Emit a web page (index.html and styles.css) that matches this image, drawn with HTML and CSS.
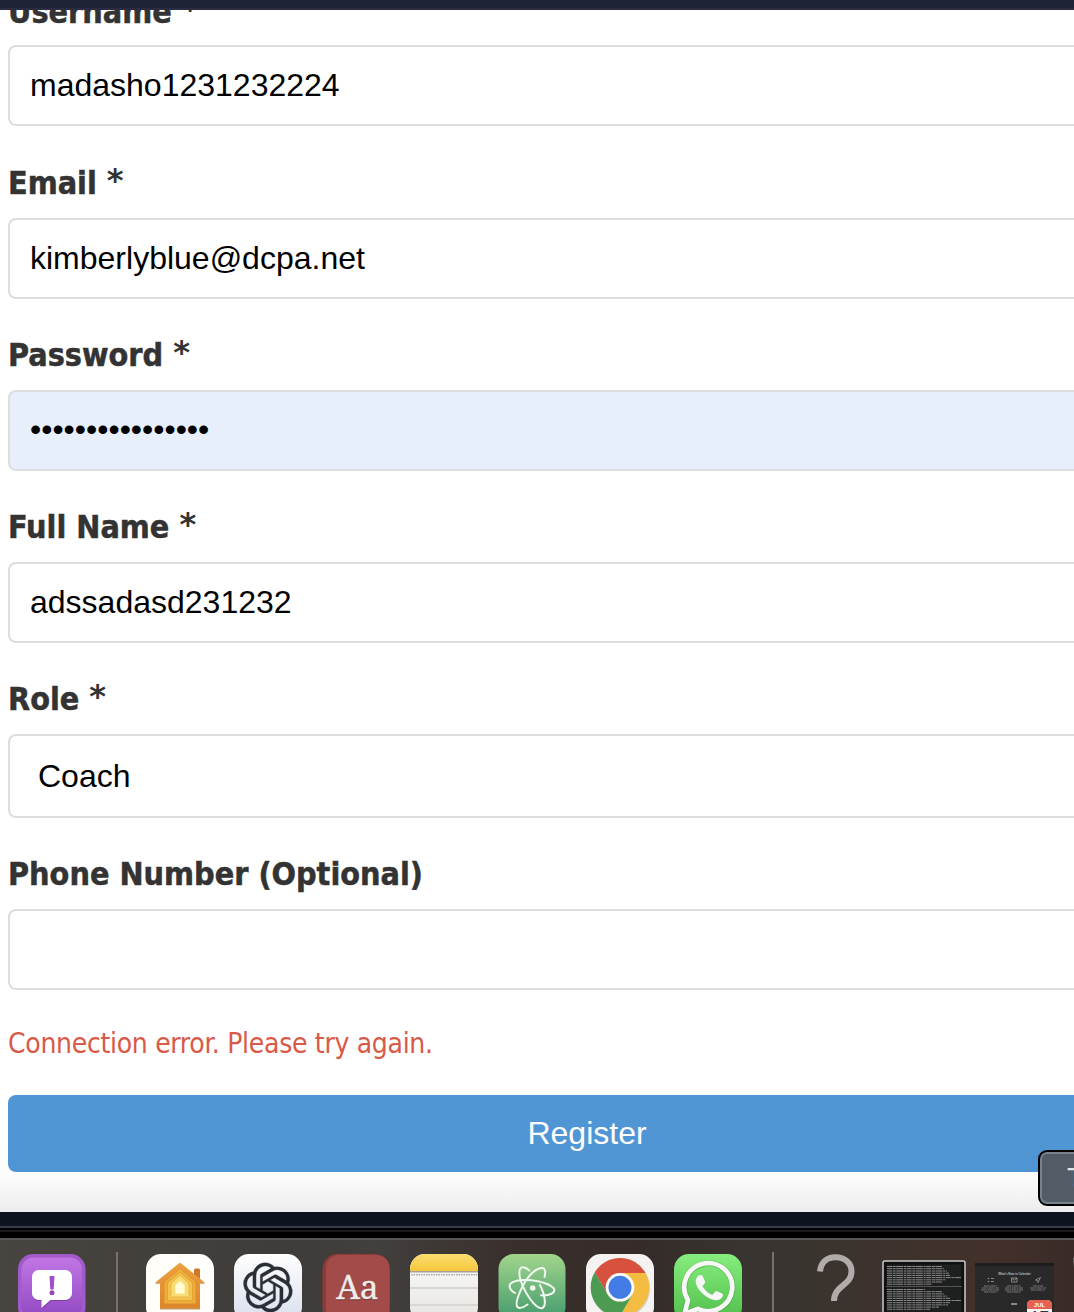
FILE: index.html
```html
<!DOCTYPE html>
<html lang="en">
<head>
<meta charset="utf-8">
<title>Register</title>
<link rel="stylesheet" href="styles.css">
</head>
<body>
<div class="screen">
  <div class="titlebar"></div>
  <main class="page">
    <form class="form">
      <div class="field"><label for="username">Username <span class="star">*</span></label><input id="username" type="text" value="madasho1231232224"></div>
      <div class="field"><label for="email">Email <span class="star">*</span></label><input id="email" type="text" value="kimberlyblue@dcpa.net"></div>
      <div class="field"><label for="password">Password <span class="star">*</span></label><input id="password" class="autofilled" type="text" value="••••••••••••••••"></div>
      <div class="field"><label for="fullname">Full Name <span class="star">*</span></label><input id="fullname" type="text" value="adssadasd231232"></div>
      <div class="field"><label for="role">Role <span class="star">*</span></label><select id="role"><option>Coach</option></select></div>
      <div class="field"><label for="phone">Phone Number (Optional)</label><input id="phone" type="text"></div>
      <p class="error">Connection error. Please try again.</p>
      <button class="submit" type="button">Register</button>
    </form>
    <div class="shade"></div>
    <div class="tooltip">T</div>
  </main>
  <div class="bezel"></div>
  <nav class="dock">
    <svg class="app" viewBox="0 0 68 68">
      <defs>
        <linearGradient id="purple" x2="0" y2="1"><stop stop-color="#c276e5"/><stop offset="1" stop-color="#9048c2"/></linearGradient>
      </defs>
      <rect width="67.500" height="68" rx="15" fill="#a25acb"/>
      <rect x="3.500" y="3.500" width="60.500" height="61" rx="12" fill="url(#purple)"/>
      <path d="M20.500 17.500H47.500a6.500 6.500 0 0 1 6.500 6.500V40.500a6.500 6.500 0 0 1-6.500 6.500H33L24 55V47H20.500a6.500 6.500 0 0 1-6.500-6.500V24a6.500 6.500 0 0 1 6.500-6.500z" fill="#7a3ca5"/>
      <path d="M20.500 16H47.500a6.500 6.500 0 0 1 6.500 6.500V39.500a6.500 6.500 0 0 1-6.500 6.500H32.500L23.500 54V46H20.500a6.500 6.500 0 0 1-6.500-6.500V22.500a6.500 6.500 0 0 1 6.500-6.500z" fill="#fff"/>
      <path d="M31.500 22h5l-.8 13.500h-3.400z" fill="#9f50c8"/><circle cx="34" cy="38.800" r="2.500" fill="#9148b8"/>
    </svg>
    <i class="divider"></i>
    <svg class="app" viewBox="0 0 68 68">
      <defs><linearGradient id="orange" x2="0" y2="1"><stop stop-color="#eda140"/><stop offset="1" stop-color="#dc862c"/></linearGradient></defs>
      <rect width="68" height="68" rx="15" fill="#fffefb"/>
      <path d="M9 29.800 34 10 59 29.800H54V55.500H14V29.800z" fill="#99672f" opacity=".65"/>
      <path d="M48 21V16q0-1.500 1.500-1.500h3q1.500 0 1.500 1.500V26z" fill="#cf7726"/>
      <path d="M9 28.700 33 9.300q1-.8 2 0L59 28.700H54V53.500q0 1-1 1H15q-1 0-1-1V28.700z" fill="url(#orange)"/>
      <path d="M18 28 34 14 50 28V50H18z" fill="#efac3b" stroke="#d68a2b" stroke-width=".7"/>
      <path d="M21.500 29 34 18 46.500 29V46.500H21.500z" fill="#f4c34d" stroke="#d99b32" stroke-width=".7"/>
      <path d="M25 29.500 34 21.500 43 29.500V43H25z" fill="#f8dc76" stroke="#dfb23f" stroke-width=".7"/>
      <path d="M29.500 31 34 27 38.500 31V39.500H29.500z" fill="#fffbd8" stroke="#fff1a0"/>
    </svg>
    <svg class="app" viewBox="0 0 68 68">
      <defs><linearGradient id="pale" x2="0" y2="1"><stop stop-color="#fff"/><stop offset="1" stop-color="#d8deed"/></linearGradient></defs>
      <rect width="68" height="68" rx="15" fill="url(#pale)"/>
      <path transform="translate(9.200 8.800) scale(2.060)" fill="#292f35" stroke="#292f35" stroke-width=".15" d="M22.2819 9.8211a5.9847 5.9847 0 0 0-.5157-4.9108 6.0462 6.0462 0 0 0-6.5098-2.9A6.0651 6.0651 0 0 0 4.9807 4.1818a5.9847 5.9847 0 0 0-3.9977 2.9 6.0462 6.0462 0 0 0 .7427 7.0966 5.98 5.98 0 0 0 .511 4.9107 6.051 6.051 0 0 0 6.5146 2.9001A5.9847 5.9847 0 0 0 13.2599 24a6.0557 6.0557 0 0 0 5.7718-4.2058 5.9894 5.9894 0 0 0 3.9977-2.9001 6.0557 6.0557 0 0 0-.7475-7.0729zm-9.022 12.6081a4.4755 4.4755 0 0 1-2.8764-1.0408l.1419-.0804 4.7783-2.7582a.7948.7948 0 0 0 .3927-.6813v-6.7369l2.02 1.1686a.071.071 0 0 1 .038.052v5.5826a4.504 4.504 0 0 1-4.4945 4.4944zm-9.6607-4.1254a4.4708 4.4708 0 0 1-.5346-3.0137l.142.0852 4.783 2.7582a.7712.7712 0 0 0 .7806 0l5.8428-3.3685v2.3324a.0804.0804 0 0 1-.0332.0615L9.74 19.9502a4.4992 4.4992 0 0 1-6.1408-1.6464zM2.3408 7.8956a4.485 4.485 0 0 1 2.3655-1.9728V11.6a.7664.7664 0 0 0 .3879.6765l5.8144 3.3543-2.0201 1.1685a.0757.0757 0 0 1-.071 0l-4.8303-2.7865A4.504 4.504 0 0 1 2.3408 7.872zm16.5963 3.8558L13.1038 8.364 15.1192 7.2a.0757.0757 0 0 1 .071 0l4.8303 2.7913a4.4944 4.4944 0 0 1-.6765 8.1042v-5.6772a.79.79 0 0 0-.407-.667zm2.0107-3.0231l-.142-.0852-4.7735-2.7818a.7759.7759 0 0 0-.7854 0L9.409 9.2297V6.8974a.0662.0662 0 0 1 .0284-.0615l4.8303-2.7866a4.4992 4.4992 0 0 1 6.6802 4.66zM8.3065 12.863l-2.02-1.1638a.0804.0804 0 0 1-.038-.0567V6.0742a4.4992 4.4992 0 0 1 7.3757-3.4537l-.142.0805L8.704 5.459a.7948.7948 0 0 0-.3927.6813zm1.0976-2.3654l2.602-1.4998 2.6069 1.4998v2.9994l-2.5974 1.4997-2.6067-1.4997Z"/>
    </svg>
    <svg class="app" viewBox="0 0 68 68">
      <rect x=".5" width="67.500" height="68" rx="15" fill="#8d3a38"/>
      <rect x="4" y="1" width="63.500" height="67" rx="13" fill="#a34b48"/>
      <text x="35.500" y="45.500" text-anchor="middle" class="dict shadow">Aa</text>
      <text x="35.500" y="44.500" text-anchor="middle" class="dict">Aa</text>
    </svg>
    <svg class="app" viewBox="0 0 68 68">
      <defs>
        <clipPath id="note"><rect width="68" height="68" rx="15"/></clipPath>
        <linearGradient id="yellow" x2="0" y2="1"><stop stop-color="#fbdc70"/><stop offset="1" stop-color="#f6c63a"/></linearGradient>
        <linearGradient id="paper" x2="0" y2="1"><stop stop-color="#fbfbfa"/><stop offset="1" stop-color="#e5e4df"/></linearGradient>
      </defs>
      <g clip-path="url(#note)">
        <rect width="68" height="68" fill="url(#paper)"/>
        <rect width="68" height="17.500" fill="url(#yellow)"/>
        <rect y="17" width="68" height="1.500" fill="#aaa294"/>
        <path d="M1 20.700H68" stroke="#aaa9a7" stroke-width="1.500" stroke-dasharray="1.500 1"/>
        <path d="M0 34H68M0 51H68" stroke="#d8d7d5" stroke-width="2"/>
      </g>
    </svg>
    <svg class="app" viewBox="0 0 68 68">
      <defs><linearGradient id="green" x2="0" y2="1"><stop stop-color="#a2d58c"/><stop offset="1" stop-color="#40986c"/></linearGradient></defs>
      <rect x=".5" width="67" height="68" rx="15" fill="url(#green)"/>
      <g fill="none" stroke="#f0f8ef" stroke-width="2" stroke-linecap="round">
        <path d="M17 39C9.500 34.500 9.500 28.500 19 26.700C31 24.500 50 28 56 34.500C58 39.500 50 42 43 41.300"/>
        <path d="M46.500 23C48 17.500 47 13.500 43.500 14C36 15 28 24 23.500 34.500C19.500 43 17 51.500 20 53.500C22 54.500 26 53 29.500 50.500"/>
        <path d="M31.300 16.500C28 13.500 24 12 22 15C20 20 23 30 28 38.500C33 47 39.500 54.500 44 54.200C48.500 52.500 47.500 42 42 31"/>
      </g><circle cx="34.700" cy="34" r="2.800" fill="#eef7ee"/>
    </svg>
    <svg class="app" viewBox="0 0 68 68">
      <rect width="68" height="68" rx="15" fill="#f4f3f2"/>
      <circle cx="34.500" cy="34.500" r="29.500" fill="#bbb" opacity=".6"/>
      <path d="M59.600 19A29.300 29.300 0 0 0 8.800 18.300L21.600 40.500 34 33.300V19z" fill="#d8513f"/>
      <path d="M59.600 19H34V33.300L46.400 40.500 33.600 62.600A29.300 29.300 0 0 0 59.600 19z" fill="#f3bd42"/>
      <path d="M8.800 18.300 21.600 40.500 34 33.300 46.400 40.500 33.600 62.600A29.300 29.300 0 0 1 8.800 18.300z" fill="#4d9a51"/>
      <circle cx="34" cy="33.300" r="14.300" fill="#fff"/><circle cx="34" cy="33.300" r="11.500" fill="#437ce5"/>
    </svg>
    <svg class="app" viewBox="0 0 68 68">
      <defs><linearGradient id="lime" x2="0" y2="1"><stop stop-color="#86ed7e"/><stop offset="1" stop-color="#50bd49"/></linearGradient></defs>
      <rect width="68" height="68" rx="15" fill="url(#lime)"/>
      <path d="M10 60 14 46A24 24 0 1 1 24 55z" fill="none" stroke="#479e42" stroke-width="6" opacity=".45"/>
      <path d="M10.500 60 14 46A24 24 0 1 1 24 54.800z" fill="none" stroke="#f6f7f6" stroke-width="4.700"/>
      <path d="M25.200 21.300h2.200q1 0 1.400 1l2.200 5.200q.4 1-.3 1.900l-2.300 2.900q4 6.500 9.800 8.700l3-3.400q.8-.9 1.900-.4l5 2.400q1 .5.8 1.700c-.6 4-5.300 5.500-8.600 4.800-9-2-17-10.300-18.500-17-.5-3.500 1.400-7 3.400-7.800z" fill="#f6f7f6"/>
    </svg>
    <i class="divider"></i>
    <svg class="missing" viewBox="0 0 44 60"><path d="M6 17.500C7 8 13 3.300 21.500 3.300C31 3.300 37.500 9 37.500 17.500C37.500 32 20 31 20 47" fill="none" stroke="#b1acaa" stroke-width="6"/></svg>
    <svg class="terminal" viewBox="0 0 84 56">
      <rect x="1" y="1" width="82" height="60" rx="2" fill="#111" stroke="#c5cccc" stroke-width="1.500"/>
      <rect x="4.500" y="4.500" width="75" height="50" fill="#1e1f1f"/>
      <g stroke="#888" stroke-width="1" stroke-dasharray="5 .7 3 .5 7 .8 2 .6">
        <path d="M5 6.500H60M5 8.700H62M5 11H65M5 13.200H67M5 15.400H68M5 17.600H79M5 19.800H64M5 22H60M5 24.200H50M5 29.500H43M5 31.700H60M5 33.900H62M5 36.100H65M5 38.300H68M5 40.500H79M5 42.700H68M5 44.900H66M5 47.100H57M5 49.300H48"/>
      </g>
      <path d="M4 26.500H80" stroke="#555"/>
    </svg>
    <svg class="calendar" viewBox="0 0 80 52">
      <rect width="79" height="60" fill="#292929"/><rect width="79" height="3" fill="#1d1d1d"/>
      <text x="39.500" y="12.300" text-anchor="middle" class="news">What's New in Calendar</text>
      <g fill="none" stroke="#aaa" stroke-width=".7"><path d="M12.500 15.500h2M16 15.500h3M12.500 18.500h2M16 18.500h3"/><path d="M36.500 15h5.500v4h-5.500zM36.500 15l2.700 2.300L42 15M60.500 17l5-2.500-2.500 5-.5-2z"/></g>
      <g stroke="#777" stroke-width="1" stroke-dasharray="4 .5 2 .5"><path d="M9 23h13M7 25h17M6 27h18M9 29h13M32 23h14M30 25h18M30 27h18M32 29h14M58 23h10M55 25h16M56 27h14"/></g>
      <path d="M36 41h6" stroke="#aaa" stroke-width="1.500"/>
      <rect x="52" y="37" width="25" height="28" rx="5" fill="#f5f4f3"/><path d="M52 46V42q0-5 5-5h15q5 0 5 5v4z" fill="#e66151"/>
      <text x="64.500" y="44" text-anchor="middle" class="month">JUL</text><text x="64.500" y="60" text-anchor="middle" class="day">17</text>
    </svg>
    <svg class="trash" viewBox="0 0 20 56"><path d="M1 2q1-1 8-1h11v55H6z" fill="#777371"/></svg>
  </nav>
</div>
</body>
</html>
```
FILE: styles.css
```css
* { box-sizing: border-box; }
html, body { margin: 0; height: 1312px; overflow: hidden; }
body { font-family: "DejaVu Sans Condensed", "DejaVu Sans", sans-serif; background: #fff; }
.screen { width: 1074px; height: 1312px; overflow: hidden; display: flex; flex-direction: column; }
.titlebar { flex: none; height: 10px; background: #1e2434; border-bottom: 2px solid #2b2c42; }
.page { position: relative; flex: none; height: 1202px; overflow: hidden; background: #fff; }
.form { width: 1166px; padding-left: 8px; margin-top: -21px; }
.field { display: flex; flex-direction: column; margin-bottom: 35px; }
.field:first-child { margin-bottom: 36px; }
label { height: 56px; padding-top: 1px; line-height: 40px; font-size: 32px; font-weight: bold; color: #333; white-space: nowrap; -webkit-text-stroke: .5px #333; }
.field:first-child label { padding-top: 3px; }
.star { display: inline-block; font-family: "DejaVu Sans", sans-serif; line-height: 30px; vertical-align: 3px; -webkit-text-stroke: 0; }
input, select { display: block; width: 1158px; height: 81px; margin: 0; padding: 0 20px; border: 2px solid #ddd; border-radius: 8px; background: #fff; color: #000; font: 32px "Liberation Sans", Arial, sans-serif; }
select { height: 84px; padding-left: 28px; appearance: none; }
.autofilled { background: #e8effc; padding-bottom: 2px; }
.error { margin: 0 0 32px; height: 38px; line-height: 38px; font-size: 28px; letter-spacing: -.31px; color: #d85a49; white-space: nowrap; }
.submit { display: block; width: 1158px; height: 77px; padding: 0; border: 0; border-radius: 8px; background: #5096d5; color: #fff; font: 32px "Liberation Sans", Arial, sans-serif; }
.shade { position: absolute; left: 0; right: 0; bottom: 0; height: 70px; background: linear-gradient(rgba(0,0,0,0), rgba(0,0,0,.015) 50%, rgba(0,0,0,.07)); }
.tooltip { position: absolute; left: 1038px; top: 1140px; width: 100px; height: 56px; padding-left: 27px; border: 2px solid #000; border-radius: 9px; box-shadow: inset 0 0 0 2px #78828a; background: #515c66; color: #dfe3e5; font: 28px/51px "Liberation Sans", Arial, sans-serif; }
.bezel { flex: none; height: 26px; background: linear-gradient(#0d1420 14px, #393b48 14px 16px, #000 16px 18px, #1a1a1a 18px 20px, #000 20px); }
.dock { flex: none; height: 74px; display: flex; align-items: flex-start; padding: 14px 0 0 18px; overflow: hidden; border-top: 2px solid #5a5653; background: linear-gradient(90deg, #48443f, #3e3b39 28%, #423f3c 35%, #382e2b 49%, #352c29 60%, #383430 69%, #3b332e 80%, #43302a 92%, #3a2b28); }
.dock svg { display: block; flex: none; }
.app { width: 68px; height: 68px; margin-right: 20px; }
.divider { flex: none; width: 2px; height: 62px; margin: -2px 28px 0 10px; background: #77716d; }
.missing { width: 44px; height: 60px; margin: 0 24px 0 12px; }
.terminal { width: 84px; height: 56px; margin: 6px 9px 0 0; }
.calendar { width: 80px; height: 52px; margin: 9px 17px 0 0; }
.trash { width: 20px; height: 56px; margin-top: 2px; }
.dict { font: 33.500px "Noto Serif", "Liberation Serif", serif; fill: #f0eceb; stroke: #f0eceb; stroke-width: .4px; }
.dict.shadow { fill: #6d2927; stroke: #6d2927; }
.news { font: bold 2.900px "Liberation Sans", sans-serif; fill: #bbb; }
.month { font: bold 6px "Liberation Sans", sans-serif; fill: #fff; }
.day { font: 17px "Liberation Sans", sans-serif; fill: #333; }
```
